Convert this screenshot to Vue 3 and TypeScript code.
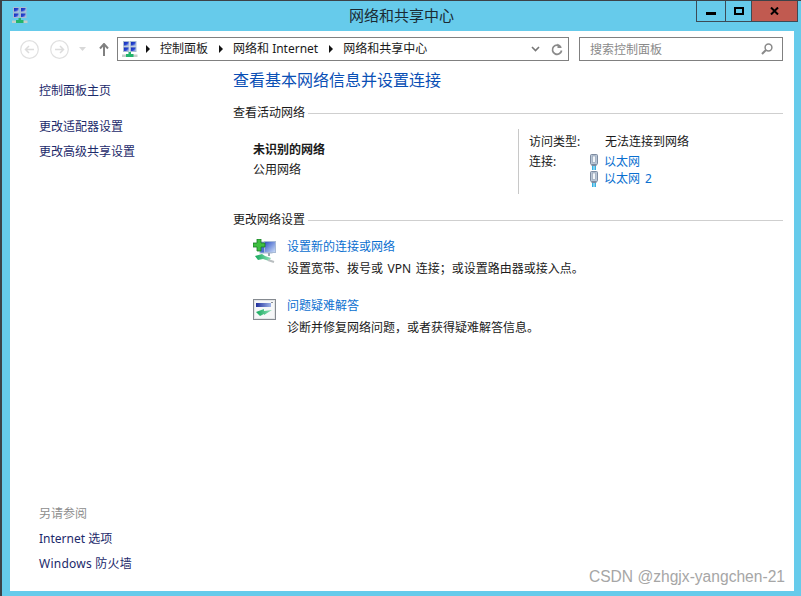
<script setup lang="ts">
const sideTop: string[] = ['更改适配器设置', '更改高级共享设置']
const crumbs: string[] = ['控制面板', '网络和 Internet', '网络和共享中心']
</script>

<template>
  <div class="win">
    <svg width="0" height="0" class="defs">
      <defs>
        <linearGradient id="scr" x1="0" y1="0" x2="1" y2="1">
          <stop offset="0" stop-color="#0f22b4" />
          <stop offset="0.55" stop-color="#2a49d0" />
          <stop offset="1" stop-color="#e8f0ff" />
        </linearGradient>
        <linearGradient id="cable" x1="0" y1="0" x2="1" y2="0">
          <stop offset="0" stop-color="#12a85a" />
          <stop offset="1" stop-color="#8fe0b8" />
        </linearGradient>
        <linearGradient id="bar" x1="0" y1="0" x2="1" y2="0">
          <stop offset="0" stop-color="#1f2f9c" />
          <stop offset="1" stop-color="#9fb4e8" />
        </linearGradient>
        <linearGradient id="mon" x1="0" y1="0" x2="1" y2="1">
          <stop offset="0" stop-color="#2c4fc4" />
          <stop offset="1" stop-color="#cfe0f8" />
        </linearGradient>
        <symbol id="net" viewBox="0 0 16 16">
          <rect x="1.5" y="0.5" width="5.5" height="4.5" fill="url(#scr)" stroke="#a9bbd2" />
          <rect x="8.5" y="0.5" width="5.5" height="4.5" fill="url(#scr)" stroke="#a9bbd2" />
          <rect x="1.5" y="6" width="5.5" height="4.5" fill="url(#scr)" stroke="#a9bbd2" />
          <rect x="8.5" y="6" width="5.5" height="4.5" fill="url(#scr)" stroke="#a9bbd2" />
          <rect x="0" y="13.5" width="15.5" height="2.5" fill="#c4cec8" />
          <path d="M6.5 11h2.5v2h2.5v3H4v-3h2.5z" fill="#22b46c" />
        </symbol>
        <symbol id="plug" viewBox="0 0 8 16">
          <rect x="0.5" y="0.5" width="7" height="10" rx="1" fill="#b9c6d6" stroke="#7d8ba0" />
          <rect x="2.5" y="2" width="3" height="6.5" fill="#f2f6fa" stroke="#8d9bb0" stroke-width="0.6" />
          <rect x="1.5" y="10.5" width="5" height="1.5" fill="#7d8ba0" />
          <rect x="2" y="12" width="4" height="4" fill="#35b0e2" />
          <rect x="3.5" y="12" width="1" height="4" fill="#d6f0fa" />
        </symbol>
      </defs>
    </svg>

    <header class="titlebar">
      <svg class="app-icon" width="16" height="16"><use href="#net" /></svg>
      <div class="title">网络和共享中心</div>
      <div class="controls">
        <div class="ctl min"><span class="min-bar"></span></div>
        <div class="ctl max"><span class="max-box"></span></div>
        <div class="ctl close">
          <svg width="9" height="8" viewBox="0 0 9 8">
            <path d="M1 0.5 L8 7.5 M8 0.5 L1 7.5" stroke="#000" stroke-width="2" />
          </svg>
        </div>
      </div>
    </header>

    <main class="client">
      <div class="toolbar">
        <svg class="round" width="19" height="19" viewBox="0 0 19 19">
          <circle cx="9.5" cy="9.5" r="8.8" fill="none" stroke="#e0e0e0" stroke-width="1.2" />
          <path d="M14 9.5H6M9 6L5.5 9.5 9 13" fill="none" stroke="#dcdcdc" stroke-width="1.5" />
        </svg>
        <svg class="round second" width="19" height="19" viewBox="0 0 19 19">
          <circle cx="9.5" cy="9.5" r="8.8" fill="none" stroke="#e0e0e0" stroke-width="1.2" />
          <path d="M5 9.5h8M10 6l3.5 3.5L10 13" fill="none" stroke="#dcdcdc" stroke-width="1.5" />
        </svg>
        <svg class="drop" width="7" height="4" viewBox="0 0 7 4"><path d="M0 0h7L3.5 4z" fill="#d8d8d8" /></svg>
        <svg class="up" width="10" height="13" viewBox="0 0 10 13">
          <path d="M5 13V2M1 5.5L5 1l4 4.5" fill="none" stroke="#808080" stroke-width="2" />
        </svg>
        <div class="addr">
          <svg class="addr-icon" width="16" height="16"><use href="#net" /></svg>
          <template v-for="c in crumbs" :key="c">
            <span class="tri"></span>
            <span class="crumb">{{ c }}</span>
          </template>
          <span class="grow"></span>
          <svg width="9" height="6" viewBox="0 0 9 6" class="chev">
            <path d="M1 1l3.5 3.5L8 1" fill="none" stroke="#777" stroke-width="1.6" />
          </svg>
          <svg width="12" height="13" viewBox="0 0 12 13" class="refresh">
            <path d="M9.8 4A4.6 4.6 0 1 0 10.6 7.5" fill="none" stroke="#8a8a8a" stroke-width="1.7" />
            <path d="M6.5 0.5v4.5h4.5z" fill="#8a8a8a" />
          </svg>
        </div>
        <div class="search">
          <span class="placeholder">搜索控制面板</span>
          <svg width="12" height="12" viewBox="0 0 12 12">
            <circle cx="7.5" cy="4.5" r="3.4" fill="none" stroke="#8a8a8a" stroke-width="1.5" />
            <path d="M5 7L1 11" stroke="#8a8a8a" stroke-width="2" />
          </svg>
        </div>
      </div>

      <div class="columns">
        <aside class="side">
          <div class="side-top">
            <div class="side-home">控制面板主页</div>
            <div v-for="s in sideTop" :key="s" class="side-link">{{ s }}</div>
          </div>
          <div class="side-bottom">
            <div class="see">另请参阅</div>
            <div class="side-link">Internet 选项</div>
            <div class="side-link wide-latin">Windows 防火墙</div>
          </div>
        </aside>

        <section class="content">
          <h1 class="heading">查看基本网络信息并设置连接</h1>

          <div class="group-title"><span>查看活动网络</span><i></i></div>
          <div class="active">
            <div class="net-name">
              <div class="bold">未识别的网络</div>
              <div class="net-kind">公用网络</div>
            </div>
            <div class="net-info">
              <div class="info-row">
                <span class="lbl">访问类型:</span>
                <span>无法连接到网络</span>
              </div>
              <div class="info-row conn">
                <span class="lbl">连接:</span>
                <div class="conn-list">
                  <div class="conn-item">
                    <svg width="8" height="16"><use href="#plug" /></svg>
                    <span class="link">以太网</span>
                  </div>
                  <div class="conn-item">
                    <svg width="8" height="16"><use href="#plug" /></svg>
                    <span class="link wide">以太网 2</span>
                  </div>
                </div>
              </div>
            </div>
          </div>

          <div class="group-title change"><span>更改网络设置</span><i></i></div>

          <div class="task">
            <svg class="task-icon" width="24" height="24" viewBox="0 0 24 24">
              <rect x="7" y="3" width="12" height="11" fill="#4a6ed0" stroke="#a8bad6" />
              <rect x="11.5" y="2.5" width="11" height="11" fill="url(#mon)" stroke="#a8bad6" />
              <path d="M16 14v3" stroke="#9aa4b2" stroke-width="2" />
              <path d="M4 0h4v4h4v4H8v4H4V8H0V4h4z" fill="#3fbf3f" stroke="#157a2a" stroke-width="0.8" />
              <path d="M2 17l7-2 3 2 6 2-2 3-6-2-5 1z" fill="url(#cable)" />
              <path d="M15 21l6 2" stroke="#b9bec0" stroke-width="2" />
            </svg>
            <div class="task-text">
              <div class="link task-link">设置新的连接或网络</div>
              <div class="task-desc spaced">设置宽带、拨号或 VPN 连接；或设置路由器或接入点。</div>
            </div>
          </div>

          <div class="task second-task">
            <svg class="task-icon" width="24" height="24" viewBox="0 0 24 24">
              <rect x="0.5" y="1.5" width="22" height="20" fill="#e4e6e8" stroke="#858a90" />
              <rect x="2" y="3" width="19" height="17" fill="#f6f7f8" />
              <rect x="3" y="5" width="15" height="4" fill="url(#bar)" />
              <path d="M18 4h2v1h-2z" fill="#8a8f96" />
              <path d="M3 14l8-3 0 2 8-1-8 5 0-1-4 2z" fill="url(#cable)" />
            </svg>
            <div class="task-text">
              <div class="link task-link">问题疑难解答</div>
              <div class="task-desc">诊断并修复网络问题，或者获得疑难解答信息。</div>
            </div>
          </div>
        </section>
      </div>

      <div class="watermark">CSDN @zhgjx-yangchen-21</div>
    </main>
  </div>
</template>

<style>
html, body { margin: 0; padding: 0; overflow: hidden; }
</style>

<style scoped>
.defs { position: absolute; }
.win {
  width: 801px;
  height: 596px;
  box-sizing: border-box;
  background: #66cbeb;
  border-top: 1px solid #3c4248;
  border-left: 2px solid #3c4248;
  display: flex;
  flex-direction: column;
  font-family: "Noto Sans", "Noto Sans CJK SC", sans-serif;
  font-size: 12px;
  color: #1a1a1a;
}
.titlebar {
  height: 30px;
  flex: none;
  display: flex;
  align-items: flex-start;
  position: relative;
}
.app-icon { margin: 6px 0 0 10px; }
.title {
  position: absolute;
  left: 0;
  right: 0;
  top: 3px;
  text-align: center;
  font-size: 15px;
  line-height: 22px;
  color: #1a2a33;
}
.controls {
  position: absolute;
  right: 3px;
  top: 0;
  display: flex;
  height: 21px;
  border: 1px solid #3c4a55;
  border-top: none;
  box-sizing: border-box;
}
.ctl { display: flex; align-items: center; justify-content: center; height: 100%; }
.min { width: 28px; border-right: 1px solid #3c4a55; }
.max { width: 25px; border-right: 1px solid #3c4a55; }
.close { width: 45px; background: #c15a50; }
.min-bar { width: 10px; height: 3px; background: #000; margin-top: 4px; }
.max-box { border: 2px solid #000; box-sizing: content-box; width: 6px; height: 4px; }
.client {
  margin: 0 7px 5px 8px;
  flex: 1;
  background: #fff;
  display: flex;
  flex-direction: column;
  position: relative;
  min-height: 0;
}
.toolbar {
  height: 36px;
  flex: none;
  display: flex;
  align-items: center;
  padding: 0 11px 0 10px;
  box-sizing: border-box;
}
.second { margin-left: 11px; }
.drop { margin-left: 10px; }
.up { margin-left: 13px; flex: none; }
.addr {
  margin-left: 8px;
  width: 452px;
  height: 24px;
  border: 1px solid #808080;
  box-sizing: border-box;
  display: flex;
  align-items: center;
  padding: 0 5px 0 4px;
}
.addr-icon { flex: none; margin-right: 8px; }
.tri {
  width: 0;
  height: 0;
  border-left: 4px solid #111;
  border-top: 4px solid transparent;
  border-bottom: 4px solid transparent;
  margin: 0 10px 0 0;
}
.crumb { margin-right: 11px; line-height: 16px; color: #1a1a1a; }
.grow { flex: 1; }
.chev { margin-right: 11px; }
.refresh { flex: none; }
.search {
  margin-left: 10px;
  width: 204px;
  height: 24px;
  border: 1px solid #808080;
  box-sizing: border-box;
  display: flex;
  align-items: center;
  justify-content: space-between;
  padding: 0 9px 0 10px;
  color: #8a8a8a;
}
.columns { flex: 1; display: flex; min-height: 0; }
.side {
  width: 223px;
  flex: none;
  box-sizing: border-box;
  padding: 16px 0 15px 29px;
  display: flex;
  flex-direction: column;
  justify-content: space-between;
}
.side-home { line-height: 16px; color: #1c2a6b; margin-bottom: 15px; }
.side-link { line-height: 25px; color: #1c2a6b; }
.wide { word-spacing: 2px; }
.wide-latin { letter-spacing: 0.25px; }
.see { color: #8d8d8d; line-height: 25px; }
.content { flex: 1; padding-right: 11px; min-width: 0; }
.heading {
  margin: 1px 0 0;
  font-size: 16px;
  font-weight: 400;
  line-height: 24px;
  color: #0a4fb5;
  height: 24px;
}
.group-title {
  display: flex;
  align-items: center;
  gap: 3px;
  line-height: 18px;
  margin-top: 12px;
  color: #1a1a1a;
}
.group-title i { flex: 1; height: 1px; background: #cfcfcf; display: block; }
.active { display: flex; height: 65px; margin-top: 7px; }
.net-name { width: 285px; padding: 11px 0 0 20px; box-sizing: border-box; }
.bold { font-weight: 700; line-height: 20px; }
.net-kind { line-height: 20px; }
.net-info { border-left: 1px solid #c8c8c8; padding: 4px 0 0 10px; flex: 1; }
.info-row { display: flex; line-height: 18px; }
.lbl { width: 76px; flex: none; }
.conn { margin-top: 2px; }
.conn-item { display: flex; align-items: center; height: 17px; margin-left: -15px; gap: 6px; }
.conn-item svg { flex: none; }
.link { color: #0a6fd0; }
.change { margin-top: 17px; }
.task { display: flex; margin-top: 9px; margin-left: 20px; }
.second-task { margin-top: 18px; }
.task-icon { flex: none; margin-right: 10px; margin-top: 1px; }
.task-text { line-height: 22px; }
.task-link { line-height: 18px; }
.task-desc { line-height: 20px; margin-top: 3px; }
.spaced { word-spacing: 1.5px; }
.watermark {
  position: absolute;
  right: 9px;
  bottom: 4px;
  font-family: "Liberation Sans", sans-serif;
  font-size: 15.6px;
  color: #a6a6a6;
  line-height: 20px;
}
</style>
